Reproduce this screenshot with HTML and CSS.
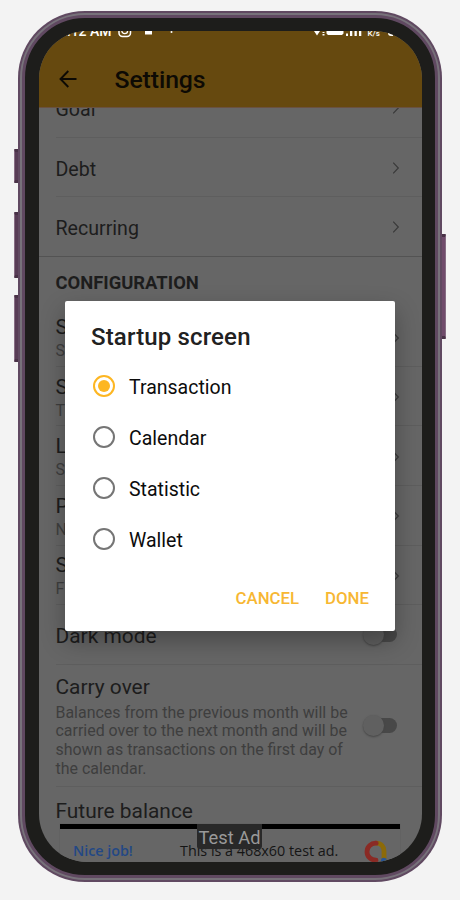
FILE: index.html
```html
<!DOCTYPE html>
<html lang="en">
<head>
<meta charset="utf-8">
<title>Settings</title>
<link rel="stylesheet" href="styles.css">
</head>
<body>
<svg class="defs" width="0" height="0">
  <symbol id="chevron" viewBox="0 0 8 14"><path d="M1.2 1.7 6.3 7l-5.1 5.3" fill="none" stroke="currentColor" stroke-width="1.2"/></symbol>
</svg>
<div class="phone">
  <i class="key key-a"></i><i class="key key-b"></i><i class="key key-c"></i><i class="key key-d"></i>
  <div class="ring"><div class="ring-inner"><div class="bezel">
    <div class="screen">
      <header class="top">
        <div class="status">
          <span class="time">2:12 AM</span>
          <svg class="status-left" width="60" height="14" viewBox="0 0 60 14"><rect x="1" y="1" width="11.5" height="11.5" rx="3.5" fill="none" stroke="#fff" stroke-width="1.5"/><circle cx="6.7" cy="6.7" r="2.9" fill="none" stroke="#fff" stroke-width="1.3"/><path d="M27 6h7v4.500h-7z" fill="#fff"/><circle cx="53.5" cy="8" r="1" fill="#fff"/></svg>
          <svg class="status-right" width="80" height="14" viewBox="0 0 80 14"><path d="M0 7h6L3 11.500zM8.500 8h2v1h-2zM8.500 10h2v1.500h-2zM12.500 5h17v4.500l-1.500 1.500h-14l-1.500-1.500zM32 9.500h2V12h-2zM36 6h2.300v6H36zM40.500 5h2.300v7h-2.300zM45 4h2.300v8H45z" fill="#fff"/></svg>
          <span class="rate">K/s</span>
          <i class="battery"></i>
        </div>
        <div class="appbar">
          <svg class="back" width="18" height="18" viewBox="0 0 18 18"><path d="M9.300 1 1.500 9l7.800 8M1.500 9h16" fill="none" stroke="#0d0a04" stroke-width="1.900"/></svg>
          <h1>Settings</h1>
        </div>
      </header>
      <main class="list">
        <div class="row"><span>Goal</span><svg class="chev"><use href="#chevron"/></svg></div>
        <div class="row"><span>Debt</span><svg class="chev"><use href="#chevron"/></svg></div>
        <div class="row last"><span>Recurring</span><svg class="chev"><use href="#chevron"/></svg></div>
        <h2>CONFIGURATION</h2>
        <div class="row two"><div><b>S</b><small>S</small></div><svg class="chev"><use href="#chevron"/></svg></div>
        <div class="row two"><div><b>S</b><small>T</small></div><svg class="chev"><use href="#chevron"/></svg></div>
        <div class="row two"><div><b>L</b><small>S</small></div><svg class="chev"><use href="#chevron"/></svg></div>
        <div class="row two"><div><b>P</b><small>N</small></div><svg class="chev"><use href="#chevron"/></svg></div>
        <div class="row two"><div><b>S</b><small>F</small></div><svg class="chev"><use href="#chevron"/></svg></div>
        <div class="row dark"><b>Dark mode</b><i class="switch"></i></div>
        <div class="row carry">
          <div><b>Carry over</b><p>Balances from the previous month will be<br>carried over to the next month and will be<br>shown as transactions on the first day of<br>the calendar.</p></div>
          <i class="switch"></i>
        </div>
        <div class="row future"><b>Future balance</b></div>
      </main>
      <aside class="ad">
        <span class="nice">Nice job!</span>
        <span class="adtext">This is a 468x60 test ad.</span>
        <svg class="admob" width="24" height="24" viewBox="0 0 24 24" fill="none" stroke-width="4.800" stroke-linecap="round"><path d="M12 3.200c5 0 8 3.500 8 8V20" stroke="#8c6a08"/><path d="M12.200 3.200A8.500 8.500 0 0 0 3 11.700c0 5 4 8.500 9 8.500" stroke="#8a2a24"/><circle cx="19.800" cy="20.500" r="2.800" fill="#275596"/></svg>
        <span class="badge">Test Ad</span>
      </aside>
      <section class="dialog">
        <h3>Startup screen</h3>
        <div class="option on"><i></i><span>Transaction</span></div>
        <div class="option"><i></i><span>Calendar</span></div>
        <div class="option"><i></i><span>Statistic</span></div>
        <div class="option"><i></i><span>Wallet</span></div>
        <div class="actions"><span class="cancel">CANCEL</span><span class="done">DONE</span></div>
      </section>
    </div>
  </div></div></div>
</div>
</body>
</html>
```

FILE: styles.css
```css
* { box-sizing: border-box; }
body { margin: 0; background: #f3f3f3; font-family: Roboto, sans-serif; height: 900px; overflow: hidden; }
h1, h2, h3, p { margin: 0; }
b { font-weight: 400; }
.defs { position: absolute; }
.phone { position: relative; width: 424px; height: 871px; margin: 11px 0 0 18px; }
.ring { position: relative; height: 100%; padding: 2px; border-radius: 67px; background: #604961; }
.ring-inner { height: 100%; padding: 2px; border-radius: 65px; background: #77727a; }
.bezel { height: 100%; border: 3px solid #604961; border-radius: 63px; background: #1d1d1b; padding: 13px 13.500px; }
.screen { position: relative; height: 831px; border-radius: 48px; overflow: hidden; background: #666; color: #1d1d1d; }

.key { position: absolute; width: 5px; left: -4px; background: #583c56; border: 1px solid #876d84; border-top: 3px solid #493247; border-bottom: 3px solid #493247; border-radius: 1px; }
.key-a { top: 138px; height: 34px; }
.key-b { top: 201px; height: 66px; }
.key-c { top: 284px; height: 67px; }
.key-d { left: 423px; top: 223px; height: 105px; background: #704b6b; }

.top { position: relative; z-index: 1; height: 77px; background: #66490f; border-bottom: 1px solid #6a5140; }
.status { display: flex; height: 20px; padding-left: 20.500px; color: #fff; transform: translateY(-7px); }
.time { width: 58.500px; font-size: 14px; font-weight: 500; line-height: 14px; }
.status-left { flex: none; }
.status-right { flex: none; margin-left: 136px; }
.rate { margin-left: -26px; font-size: 8px; font-weight: 500; line-height: 20px; }
.battery { width: 5px; height: 4px; margin: 8px 0 0 8px; background: #fff; border-radius: 0 0 0 3px; }
.appbar { display: flex; align-items: center; height: 56px; padding-left: 20.500px; }
.back { position: relative; top: -.5px; }
.appbar h1 { margin-left: 37.500px; padding-top: 1px; font-size: 24.800px; font-weight: 500; line-height: 30px; color: #0d0a04; letter-spacing: -.1px; }

.list { margin-top: -30px; }
.row { position: relative; display: flex; justify-content: space-between; align-items: center; height: 59.600px; margin-left: 17px; padding-right: 21.500px; border-bottom: 1px solid #5e5e5e; font-size: 19.600px; line-height: 24px; }
.row > span { padding-top: 5.500px; }
.row.last { margin-left: 0; padding-left: 17px; border-color: #535353; }
.chev { width: 8px; height: 14px; margin-top: 2px; color: #3a3a3a; }
h2 { height: 50.500px; padding: 14px 0 0 17px; font-size: 18.400px; font-weight: 700; line-height: 24px; }
.two b, .two small { display: block; }
.two b { line-height: 24px; font-size: 21px; padding-top: 4px; }
.two small { padding-top: 1px; font-size: 16px; line-height: 22px; color: #3f3f3f; }
.row.dark { padding-right: 25px; font-size: 20.900px; }
.dark b { padding-top: 3px; }
.row.carry { height: 122.500px; padding-right: 25px; }
.carry b, .future b { font-size: 20.900px; line-height: 25px; }
.carry b { position: relative; top: 2px; }
.carry p { font-size: 15.950px; line-height: 18.800px; color: #3e3e3e; padding-top: 6px; white-space: nowrap; }
.switch { position: relative; flex: none; width: 34px; height: 22px; }
.switch::before { content: ""; position: absolute; right: 0; top: 3px; width: 32px; height: 15px; border-radius: 8px; background: #484848; }
.switch::after { content: ""; position: absolute; left: 0; top: 0; width: 21px; height: 21px; border-radius: 50%; background: #606060; box-shadow: 0 1px 2px #454545; }
.future { align-items: flex-start; padding-top: 12px; border: 0; }

.ad { position: absolute; left: 21.500px; top: 793px; width: 340px; height: 60px; display: flex; border-top: 5px solid #000; background: #666; box-shadow: 0 0 1px #555; font-family: "Open Sans", sans-serif; }
.nice { width: 107px; margin: 13px 0 0 13px; font-size: 14.300px; font-weight: 600; line-height: 18px; color: #234885; }
.adtext { width: 184px; margin-top: 13px; font-size: 14.350px; line-height: 18px; color: #151515; white-space: nowrap; }
.admob { margin-top: 11px; flex: none; }
.badge { position: absolute; left: 137px; top: -5px; width: 65px; height: 25px; background: #292929; color: #999; border-radius: 0 0 3px 3px; font-family: Roboto, sans-serif; font-size: 18.300px; line-height: 27px; text-align: center; white-space: nowrap; }

.dialog { position: absolute; z-index: 2; left: 26.500px; top: 270px; width: 330px; height: 330px; padding: 20px 26px 0; background: #fff; border-radius: 2px; box-shadow: 0 10px 24px rgba(0, 0, 0, .3); color: #0c0c0c; }
.dialog h3 { height: 40px; font-size: 24px; font-weight: 500; line-height: 32px; color: #212121; letter-spacing: .15px; }
.option { display: flex; align-items: center; height: 51px; font-size: 19.500px; line-height: 24px; }
.option i { display: grid; place-items: center; width: 22px; height: 22px; margin-left: 1.500px; margin-right: 14.500px; margin-top: -1px; border: 2px solid #757575; border-radius: 50%; }
.option span { padding-top: 3px; }
.option.on i { border-color: #fdb622; }
.option.on i::after { content: ""; width: 12px; height: 12px; border-radius: 50%; background: #fdb622; }
.actions { display: flex; justify-content: flex-end; gap: 26px; margin-top: 21px; font-size: 16.800px; font-weight: 500; line-height: 24px; color: #f7b733; }
```
